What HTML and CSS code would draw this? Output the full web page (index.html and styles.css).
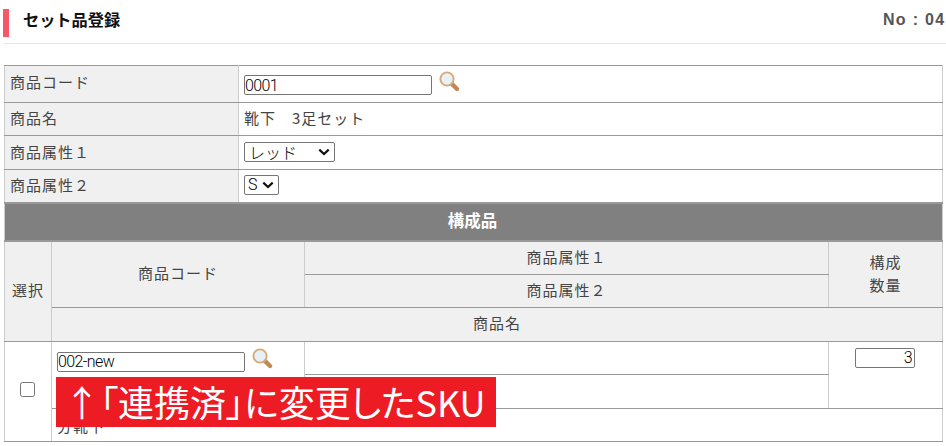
FILE: index.html
```html
<!DOCTYPE html>
<html lang="ja">
<head>
<meta charset="utf-8">
<title>セット品登録</title>
<link rel="stylesheet" href="styles.css">
</head>
<body>
<header class="page-head">
  <h1 class="title">セット品登録</h1>
  <div class="number">No : 04</div>
</header>
<main class="content">
  <table class="form">
    <colgroup>
      <col class="c-select"><col class="c-code"><col class="c-gap"><col class="c-attr"><col class="c-qty">
    </colgroup>
    <tr class="r-code">
      <th colspan="2" class="label label-code">商品コード</th>
      <td colspan="3"><div class="search"><input class="field field-code" type="text" value="0001"><svg class="lens" viewBox="0 0 21 21"><use href="#lens"/></svg></div></td>
    </tr>
    <tr class="r-name">
      <th colspan="2" class="label">商品名</th>
      <td colspan="3">靴下　3足セット</td>
    </tr>
    <tr class="r-attr1">
      <th colspan="2" class="label">商品属性１</th>
      <td colspan="3"><div class="pick pick-color" role="combobox" aria-expanded="false"><span>レッド</span><svg class="chevron" viewBox="0 0 12 8"><use href="#chevron"/></svg></div></td>
    </tr>
    <tr class="r-attr2">
      <th colspan="2" class="label">商品属性２</th>
      <td colspan="3"><div class="pick pick-size" role="combobox" aria-expanded="false"><span>S</span><svg class="chevron" viewBox="0 0 12 8"><use href="#chevron"/></svg></div></td>
    </tr>
    <tr class="r-band">
      <th colspan="5" class="band">構成品</th>
    </tr>
    <tr class="r-half">
      <th rowspan="3" class="center">選択</th>
      <th rowspan="2" colspan="2" class="center">商品コード</th>
      <th class="center">商品属性１</th>
      <th rowspan="2" class="center qty-head">構成<br>数量</th>
    </tr>
    <tr class="r-half"><th class="center">商品属性２</th></tr>
    <tr class="r-half"><th colspan="4" class="center">商品名</th></tr>
    <tr class="r-half">
      <td rowspan="3" class="center cell-check"><input class="check" type="checkbox"></td>
      <td rowspan="2" colspan="2" class="cell-top"><div class="search"><input class="field field-sku" type="text" value="002-new"><svg class="lens" viewBox="0 0 21 21"><use href="#lens"/></svg></div></td>
      <td></td>
      <td rowspan="2" class="cell-top center"><input class="field field-qty" type="text" value="3"></td>
    </tr>
    <tr class="r-half"><td></td></tr>
    <tr class="r-half"><td colspan="4" class="cell-name">分靴下</td></tr>
  </table>
  <div class="callout">↑「連携済」に変更したSKU</div>
</main>
<svg class="defs" aria-hidden="true">
  <symbol id="lens" viewBox="0 0 21 21">
    <path d="M12.5 12.5 L18 18" stroke="#c08a52" stroke-width="4.4" stroke-linecap="round"/>
    <circle cx="8" cy="8" r="6.6" fill="#e8f1fa" stroke="#d8ab76" stroke-width="1.9"/>
  </symbol>
  <symbol id="chevron" viewBox="0 0 12 8">
    <path d="M1.3 1.6 L6 6 L10.7 1.6" fill="none" stroke="#111" stroke-width="2.2"/>
  </symbol>
</svg>
</body>
</html>
```

FILE: styles.css
```css
html, body {
  margin: 0;
  padding: 0;
  width: 946px;
  height: 446px;
  overflow: hidden;
  background: #fff;
}
body {
  font-family: "Noto Sans CJK JP", sans-serif;
  font-size: 15px;
  letter-spacing: 1px;
  color: #444;
  position: relative;
}
.page-head {
  display: flex;
  align-items: flex-start;
  width: 942px;
  height: 43px;
  margin-left: 4px;
  border-bottom: 1px solid #e6e6e6;
  position: relative;
}
.page-head::before {
  content: "";
  position: absolute;
  left: -1px;
  top: 9px;
  width: 6px;
  height: 28px;
  background: #f9566a;
}
.title {
  margin: 8px 0 0 19px;
  width: 860px;
  flex: none;
  font-size: 16.2px;
  line-height: 22px;
  font-weight: 700;
  letter-spacing: 0;
  color: #111;
}
.number {
  flex: none;
  margin-top: 11px;
  font-family: "Liberation Sans", sans-serif;
  font-size: 16px;
  line-height: 18px;
  font-weight: 700;
  letter-spacing: 1.3px;
  color: #555;
  white-space: nowrap;
}
.content {
  padding: 21px 0 0 4px;
}
.form {
  width: 938px;
  table-layout: fixed;
  border-collapse: collapse;
  border: 1px solid #999;
}
.c-select { width: 47px; }
.c-code { width: 187px; }
.c-gap { width: 66px; }
.c-attr { width: 524px; }
.c-qty { width: 114px; }
th, td {
  padding: 0 5px 2px;
  font-weight: 400;
  text-align: left;
  border-top: 1px solid #999;
  border-bottom: 1px solid #999;
  border-left: 1px solid #ccc;
  border-right: 1px solid #ccc;
  line-height: 20px;
}
th { background: #f0f0f0; }
.label-code { padding-bottom: 5px; }
.qty-head { line-height: 23px; }
.r-code { height: 37px; }
.r-name { height: 33px; }
.r-attr1 { height: 34px; }
.r-attr2 { height: 33px; }
.r-band { height: 38px; }
.r-half { height: 33.5px; }
.center { text-align: center; }
.band {
  background: #808080;
  color: #fff;
  font-weight: 700;
  font-size: 16.5px;
  letter-spacing: 0;
  text-align: center;
  border-top: 2px solid #999;
  border-bottom: 2px solid #999;
  padding: 0 7px 4px 5px;
}
.search {
  display: flex;
  align-items: flex-start;
  gap: 7px;
}
.field {
  box-sizing: border-box;
  height: 20px;
  padding: 0;
  border: 1px solid #767676;
  border-radius: 2px;
  background: #fff;
  font-family: "Roboto", sans-serif;
  font-weight: 300;
  font-size: 16px;
  letter-spacing: -0.6px;
  color: #000;
}
.field-code, .field-sku { width: 188px; margin-top: 4px; }
.field-qty {
  width: 60px;
  display: block;
  margin-left: 21px;
  padding-right: 2px;
  text-align: right;
}
.lens { width: 21px; height: 21px; flex: none; }
.cell-top { vertical-align: top; padding-top: 6px; }
.pick {
  box-sizing: border-box;
  display: flex;
  align-items: center;
  justify-content: space-between;
  height: 20px;
  padding: 0 4px 0 3px;
  font-size: 16px;
  line-height: 18px;
  letter-spacing: 0;
  font-weight: 300;
  color: #000;
  border: 1px solid #767676;
  border-radius: 2px;
  background: #fff;
}
.pick-color { width: 91px; padding-left: 4px; }
.pick-size {
  width: 35px;
  font-family: "Roboto", sans-serif;
  font-weight: 300;
}
.chevron { width: 12px; height: 8px; flex: none; }
.cell-check { padding-bottom: 7px; }
.check {
  width: 15px;
  height: 15px;
  margin: 0 0 0 -2px;
  vertical-align: middle;
}
.cell-name { vertical-align: top; padding-top: 7px; }
.callout {
  position: absolute;
  left: 56px;
  top: 377px;
  width: 440px;
  height: 50px;
  background: #ed1c24;
  color: #fff;
  font-size: 36px;
  line-height: 48px;
  letter-spacing: 0;
  font-feature-settings: "palt";
  white-space: nowrap;
  padding-left: 8px;
  box-sizing: border-box;
}
.defs { position: absolute; width: 0; height: 0; }
```
